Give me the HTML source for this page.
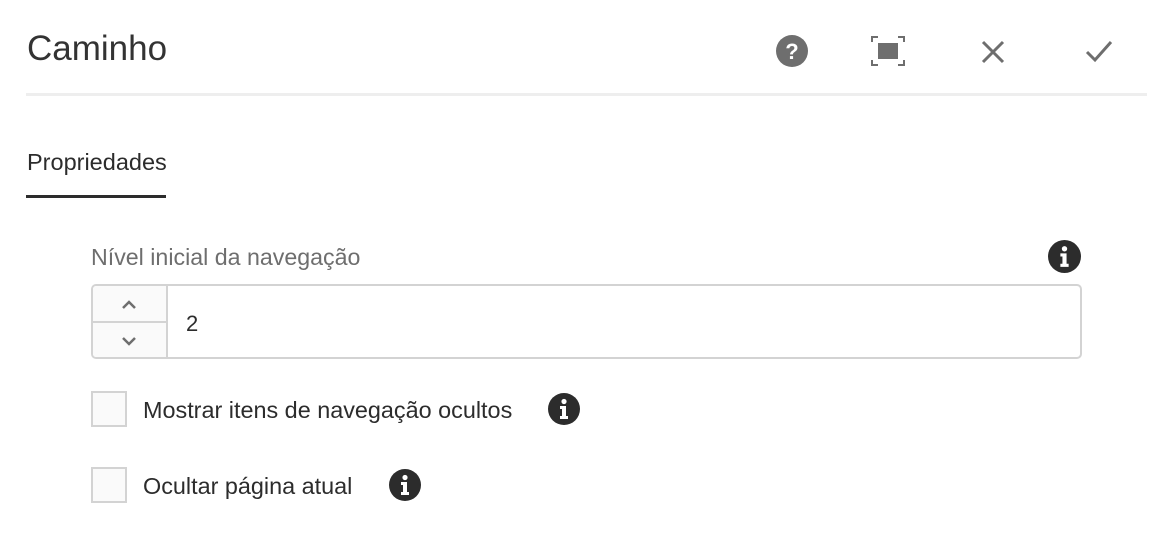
<!DOCTYPE html>
<html><head><style>
body{margin:0;width:1150px;height:560px;background:#fff;font-family:"Liberation Sans",sans-serif;position:relative;overflow:hidden;color:#2c2c2c}
.a{position:absolute}
</style></head><body>
<div class="a" style="left:27px;top:29px;font-size:35px;color:#333;font-weight:300">Caminho</div>
<svg class="a" style="left:776px;top:35px" width="32" height="32" viewBox="0 0 32 32"><circle cx="16" cy="16" r="16" fill="#6e6e6e"/><text x="16" y="24" text-anchor="middle" font-family="Liberation Sans" font-weight="bold" font-size="22" fill="#fff">?</text></svg>
<svg class="a" style="left:871px;top:36px" width="34" height="30" viewBox="0 0 34 30"><path d="M1 6V1h6M27 1h6v5M33 24v5h-6M7 29H1v-5" fill="none" stroke="#6e6e6e" stroke-width="2"/><rect x="7" y="7" width="20" height="16" fill="#6e6e6e"/></svg>
<svg class="a" style="left:981px;top:40px" width="24" height="24" viewBox="0 0 24 24"><path d="M2 2L22 22M22 2L2 22" stroke="#6e6e6e" stroke-width="3"/></svg>
<svg class="a" style="left:1085px;top:38px" width="28" height="26" viewBox="0 0 28 26"><path d="M2 14L10 22L26 4" fill="none" stroke="#6e6e6e" stroke-width="3"/></svg>
<div class="a" style="left:26px;top:93px;width:1121px;height:3px;background:#eeeeee"></div>
<div class="a" style="left:27px;top:149px;font-size:23.5px;color:#2c2c2c">Propriedades</div>
<div class="a" style="left:26px;top:195px;width:140px;height:3px;background:#2c2c2c"></div>
<div class="a" style="left:91px;top:244px;font-size:23.2px;color:#6e6e6e">Nível inicial da navegação</div>
<svg class="a" style="left:1048px;top:240px" width="33" height="33" viewBox="0 0 32 32"><circle cx="16" cy="16" r="16" fill="#2c2c2c"/><circle cx="16" cy="8.5" r="2.6" fill="#fff"/><path d="M12 13h6v10h2v3h-8v-3h2v-7h-2z" fill="#fff"/></svg>
<div class="a" style="left:91px;top:284px;width:987px;height:71px;border:2px solid #d3d3d3;border-radius:5px;overflow:hidden">
<div class="a" style="left:0;top:0;width:73px;height:72px;background:#fafafa;border-right:2px solid #d3d3d3"></div>
<div class="a" style="left:0;top:35px;width:73px;height:2px;background:#d3d3d3"></div>
<svg class="a" style="left:28px;top:14px" width="16" height="10" viewBox="0 0 16 10"><path d="M2 8L8 2L14 8" fill="none" stroke="#6e6e6e" stroke-width="2.5"/></svg>
<svg class="a" style="left:28px;top:50px" width="16" height="10" viewBox="0 0 16 10"><path d="M2 2L8 8L14 2" fill="none" stroke="#6e6e6e" stroke-width="2.5"/></svg>
<div class="a" style="left:93px;top:25px;font-size:22px;color:#2c2c2c">2</div>
</div>
<div class="a" style="left:91px;top:391px;width:32px;height:32px;border:2px solid #d3d3d3;background:#fafafa"></div>
<div class="a" style="left:143px;top:397px;font-size:23.4px">Mostrar itens de navegação ocultos</div>
<svg class="a" style="left:548px;top:393px" width="32" height="32" viewBox="0 0 32 32"><circle cx="16" cy="16" r="16" fill="#2c2c2c"/><circle cx="16" cy="8.5" r="2.6" fill="#fff"/><path d="M12 13h6v10h2v3h-8v-3h2v-7h-2z" fill="#fff"/></svg>
<div class="a" style="left:91px;top:467px;width:32px;height:32px;border:2px solid #d3d3d3;background:#fafafa"></div>
<div class="a" style="left:143px;top:473px;font-size:23.4px">Ocultar página atual</div>
<svg class="a" style="left:389px;top:469px" width="32" height="32" viewBox="0 0 32 32"><circle cx="16" cy="16" r="16" fill="#2c2c2c"/><circle cx="16" cy="8.5" r="2.6" fill="#fff"/><path d="M12 13h6v10h2v3h-8v-3h2v-7h-2z" fill="#fff"/></svg>
</body></html>
